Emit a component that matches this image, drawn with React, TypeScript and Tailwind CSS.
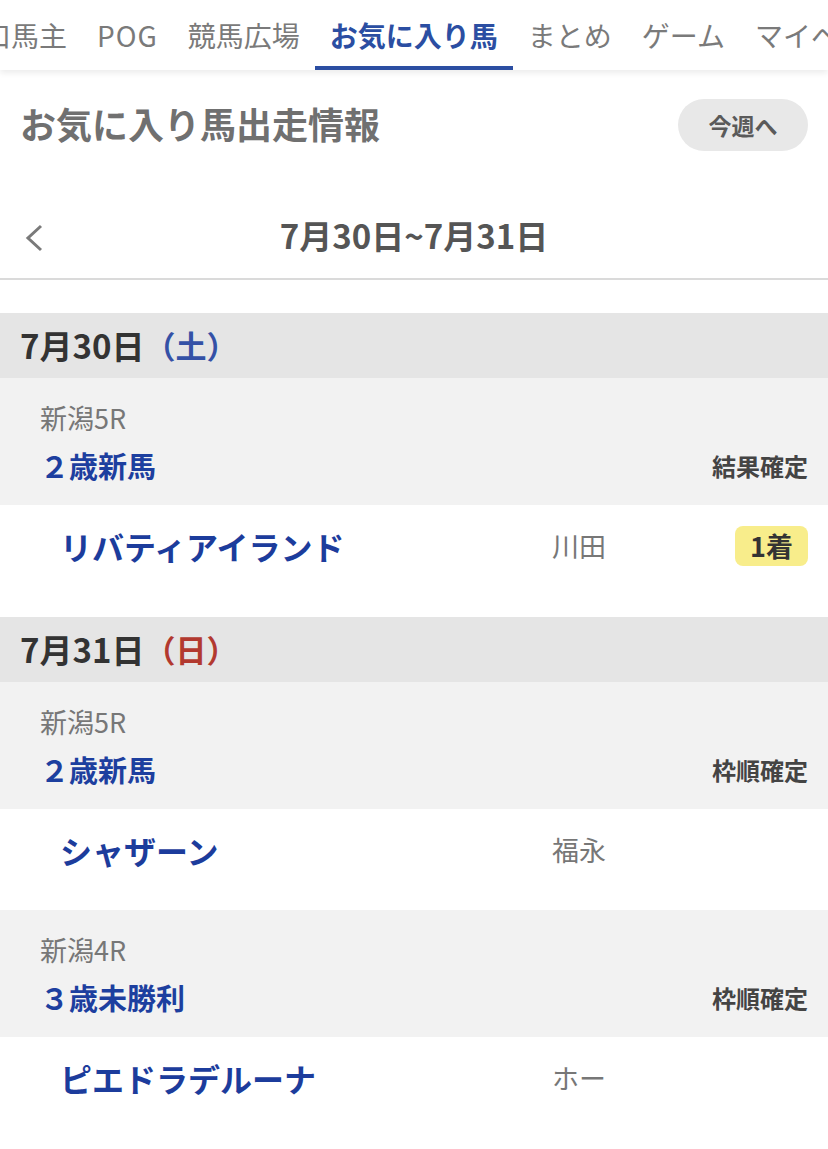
import React from "react";

type Horse = {
  name: string;
  jockey: string;
  result?: string;
};

type Race = {
  place: string;
  title: string;
  status: string;
  horse: Horse;
  rowHeight: string;
};

type Day = {
  date: string;
  weekday: string;
  color: string;
  races: Race[];
};

const tabs = ["口馬主", "POG", "競馬広場", "お気に入り馬", "まとめ", "ゲーム", "マイページ"];

const days: Day[] = [
  {
    date: "7月30日",
    weekday: "（土）",
    color: "text-[#3451a6]",
    races: [
      {
        place: "新潟5R",
        title: "２歳新馬",
        status: "結果確定",
        horse: { name: "リバティアイランド", jockey: "川田", result: "1着" },
        rowHeight: "h-[112px]",
      },
    ],
  },
  {
    date: "7月31日",
    weekday: "（日）",
    color: "text-[#b2392f]",
    races: [
      {
        place: "新潟5R",
        title: "２歳新馬",
        status: "枠順確定",
        horse: { name: "シャザーン", jockey: "福永" },
        rowHeight: "h-[101px]",
      },
      {
        place: "新潟4R",
        title: "３歳未勝利",
        status: "枠順確定",
        horse: { name: "ピエドラデルーナ", jockey: "ホー" },
        rowHeight: "h-[112px]",
      },
    ],
  },
];

const RaceBlock = ({ race }: { race: Race }) => (
  <div>
    <div className="bg-[#f2f2f2] h-[127px] pt-[22px] pl-[40px] pr-[20px]">
      <div className="h-[36px] leading-[36px] text-[27px] text-[#777777]">{race.place}</div>
      <div className="mt-[10px] h-[40px] flex items-center justify-between">
        <span className="text-[29px] font-bold text-[#1d3f9f]">{race.title}</span>
        <span className="text-[24px] font-bold text-[#444444]">{race.status}</span>
      </div>
    </div>
    <div className={`bg-white pt-[21px] pl-[60px] pr-[20px] ${race.rowHeight}`}>
      <div className="h-[40px] flex items-center">
        <span className="w-[492px] text-[32px] font-bold text-[#1c3c9c]">{race.horse.name}</span>
        <span className="flex-1 text-[27px] text-[#777777]">{race.horse.jockey}</span>
        {race.horse.result && (
          <span className="h-[40px] px-[15px] flex items-center rounded-[8px] bg-[#f8ed8b] text-[27px] font-bold text-[#333333]">
            {race.horse.result}
          </span>
        )}
      </div>
    </div>
  </div>
);

export default function App() {
  return (
    <div className="w-[828px] min-h-[1149px] bg-white overflow-hidden font-['Noto_Sans_CJK_JP','Noto_Sans',sans-serif]">
      {/* top tabs */}
      <nav className="relative z-10 h-[70px] bg-white shadow-[0_3px_6px_rgba(0,0,0,0.08)] overflow-hidden">
        <div className="flex h-full -ml-[32px] whitespace-nowrap">
          {tabs.map((tab) => {
            const active = tab === "お気に入り馬";
            return (
              <div
                key={tab}
                className={`h-full px-[15px] flex items-center text-[28px] ${
                  active
                    ? "font-bold text-[#2b4ea2] border-b-4 border-[#2b4ea2] pt-[4px]"
                    : "text-[#7a7a7a]"
                }`}
              >
                {tab === "POG" ? <span className="tracking-[1px]">{tab}</span> : tab}
              </div>
            );
          })}
        </div>
      </nav>

      {/* title */}
      <div className="flex items-center justify-between px-[20px] mt-[29px] h-[52px]">
        <h1 className="text-[36px] leading-[52px] font-bold text-[#707070] -mt-[4px]">お気に入り馬出走情報</h1>
        <button className="w-[130px] h-[52px] rounded-full bg-[#e8e8e8] text-[23px] font-bold text-[#5a5a5a]">
          今週へ
        </button>
      </div>

      {/* week switcher */}
      <div className="relative mt-[45px] h-[84px] flex items-center justify-center border-b-2 border-[#dadada]">
        <svg className="absolute left-[24px] top-[28px]" width="20" height="28" viewBox="0 0 20 28">
          <polyline points="17,2 4,14 17,26" fill="none" stroke="#7a7a7a" strokeWidth="3" />
        </svg>
        <span className="text-[33px] font-bold text-[#555555] -mt-[2px]">7月30日~7月31日</span>
      </div>

      <div className="h-[33px]" />

      {days.map((day) => (
        <section key={day.date}>
          <div className="h-[65px] bg-[#e5e5e5] pl-[20px] flex items-center">
            <span className="text-[33px] font-bold text-[#333333]">{day.date}</span>
            <span className={`text-[31px] font-bold ${day.color}`}>{day.weekday}</span>
          </div>
          {day.races.map((race) => (
            <RaceBlock key={race.place + race.title} race={race} />
          ))}
        </section>
      ))}
    </div>
  );
}
